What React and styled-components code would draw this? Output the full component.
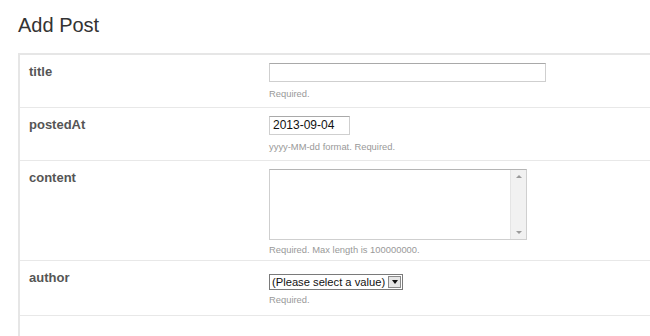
import React from "react";
import styled, { createGlobalStyle } from "styled-components";

const GlobalStyle = createGlobalStyle`
  html, body {
    margin: 0;
    padding: 0;
    background: #fff;
    font-family: "Liberation Sans", Arial, sans-serif;
    overflow: hidden;
  }
`;

const Page = styled.div`
  padding: 14px 0 0 18px;
  height: 336px;
  box-sizing: border-box;
  overflow: hidden;
`;

const Title = styled.h1`
  margin: 0 0 16px 0;
  font-size: 20px;
  font-weight: normal;
  color: #333;
  line-height: 23px;
`;

const Panel = styled.div`
  border-top: 2px solid #e6e6e6;
  border-left: 2px solid #e6e6e6;
`;

const Row = styled.div`
  display: grid;
  grid-template-columns: 240px 1fr;
  height: ${(p) => p.h}px;
  border-bottom: ${(p) => (p.last ? "none" : "1px solid #e8e8e8")};
  box-sizing: border-box;
  padding: 8px 0 0 9px;
`;

const Label = styled.div`
  font-size: 13px;
  font-weight: bold;
  color: #555;
  line-height: 15px;
  padding-top: 1px;
`;

const Field = styled.div`
  display: flex;
  flex-direction: column;
  align-items: flex-start;
`;

const TextBox = styled.div`
  width: ${(p) => p.w}px;
  height: 19px;
  box-sizing: border-box;
  border: 1px solid #cfcfcf;
  border-top-color: #a9a9a9;
  font-size: 12px;
  color: #111;
  line-height: 17px;
  padding-left: 3px;
`;

const Help = styled.div`
  font-size: 9.4px;
  color: #999;
  margin-top: ${(p) => p.mt || 6}px;
  line-height: 11px;
`;

const Area = styled.div`
  width: 258px;
  height: 71px;
  box-sizing: border-box;
  border: 1px solid #cfcfcf;
  border-top-color: #b5b5b5;
  display: flex;
  justify-content: flex-end;
`;

const Scroll = styled.div`
  width: 16px;
  background: #f1f1f1;
  border-left: 1px solid #e4e4e4;
  display: flex;
  flex-direction: column;
  justify-content: space-between;
  align-items: center;
  padding: 5px 0;
  box-sizing: border-box;
`;

const Arrow = styled.div`
  width: 0;
  height: 0;
  border-left: 3px solid transparent;
  border-right: 3px solid transparent;
  ${(p) =>
    p.up ? "border-bottom: 3px solid #9a9a9a;" : "border-top: 3px solid #9a9a9a;"}
`;

const Select = styled.div`
  height: 16px;
  box-sizing: border-box;
  border: 1px solid #7a7a7a;
  display: flex;
  align-items: center;
  font-size: 11.2px;
  color: #111;
  padding-left: 2px;
  margin-top: 5px;
`;

const SelectBtn = styled.div`
  width: 13px;
  height: 12px;
  margin: 0 1px 0 3px;
  box-sizing: border-box;
  border: 1px solid #8a8a8a;
  background: #e6e6e6;
  display: flex;
  align-items: center;
  justify-content: center;
`;

const Caret = styled.div`
  width: 0;
  height: 0;
  border-left: 3px solid transparent;
  border-right: 3px solid transparent;
  border-top: 4px solid #111;
`;

export default function App() {
  return (
    <>
      <GlobalStyle />
      <Page>
        <Title>Add Post</Title>
        <Panel>
          <Row h={53}>
            <Label>title</Label>
            <Field>
              <TextBox w={277} />
              <Help>Required.</Help>
            </Field>
          </Row>
          <Row h={53}>
            <Label>postedAt</Label>
            <Field>
              <TextBox w={81}>2013-09-04</TextBox>
              <Help>yyyy-MM-dd format. Required.</Help>
            </Field>
          </Row>
          <Row h={100}>
            <Label>content</Label>
            <Field>
              <Area>
                <Scroll>
                  <Arrow up />
                  <Arrow />
                </Scroll>
              </Area>
              <Help mt={4}>Required. Max length is 100000000.</Help>
            </Field>
          </Row>
          <Row h={55}>
            <Label>author</Label>
            <Field>
              <Select>
                (Please select a value)
                <SelectBtn>
                  <Caret />
                </SelectBtn>
              </Select>
              <Help mt={4}>Required.</Help>
            </Field>
          </Row>
          <Row h={20} last />
        </Panel>
      </Page>
    </>
  );
}
